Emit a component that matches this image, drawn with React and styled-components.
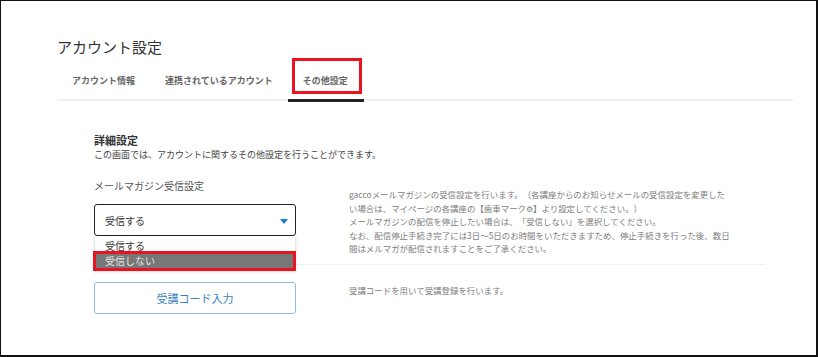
import React from "react";
import styled, { createGlobalStyle } from "styled-components";

const GlobalStyle = createGlobalStyle`
  body {
    margin: 0;
    background: #fff;
    font-family: "Noto Sans CJK JP", "Noto Sans", sans-serif;
    text-spacing-trim: space-all;
  }
`;

const mailText = [
  "gaccoメールマガジンの受信設定を行います。（各講座からのお知らせメールの受信設定を変更した",
  "い場合は、マイページの各講座の【歯車マーク⚙】より設定してください。）",
  "メールマガジンの配信を停止したい場合は、「受信しない」を選択してください。",
  "なお、配信停止手続き完了には3日～5日のお時間をいただきますため、停止手続きを行った後、数日",
  "間はメルマガが配信されますことをご了承ください。",
];

function App() {
  return (
    <>
      <GlobalStyle />
      <Frame>
        <Title>アカウント設定</Title>
        <TabBar>
          <Tab>アカウント情報</Tab>
          <Tab>連携されているアカウント</Tab>
          <Tab active>
            その他設定
            <Marker />
          </Tab>
        </TabBar>

        <Section>
          <Heading>詳細設定</Heading>
          <Lead>この画面では、アカウントに関するその他設定を行うことができます。</Lead>

          <Row divided>
            <Left>
              <Label>メールマガジン受信設定</Label>
              <SelectBox>
                <span>受信する</span>
                <svg width="8" height="5" viewBox="0 0 8 5">
                  <path d="M0 0 H8 L4 5 Z" fill="#1f7bc4" />
                </svg>
                <Options>
                  <Option>受信する</Option>
                  <Option selected>受信しない</Option>
                </Options>
              </SelectBox>
            </Left>
            <Note offset={9}>
              {mailText.map((line) => (
                <Line key={line}>{line}</Line>
              ))}
            </Note>
          </Row>

          <Row>
            <Left>
              <CodeButton>受講コード入力</CodeButton>
            </Left>
            <Note offset={2}>
              <Line>受講コードを用いて受講登録を行います。</Line>
            </Note>
          </Row>
        </Section>
      </Frame>
    </>
  );
}

const Frame = styled.div`
  box-sizing: border-box;
  width: 818px;
  height: 357px;
  border: 1px solid #111;
  border-right-width: 2px;
  border-bottom-width: 2px;
  padding: 36px 23px 0 56px;
  overflow: hidden;
`;

const Title = styled.h1`
  margin: 0;
  font-size: 15px;
  line-height: 20px;
  font-weight: 400;
  color: #333;
`;

const TabBar = styled.div`
  display: flex;
  margin-top: 3px;
  height: 39px;
  border-bottom: 2px solid #efefef;
`;

const Tab = styled.div`
  position: relative;
  display: flex;
  align-items: center;
  padding: 2px 15px 0;
  font-size: 9px;
  font-weight: 700;
  color: #666;
  white-space: nowrap;

  ${({ active }) =>
    active &&
    `
    &::after {
      content: "";
      position: absolute;
      left: 0;
      right: -1px;
      top: 100%;
      height: 3px;
      background: #222;
    }
  `}
`;

const Marker = styled.span`
  position: absolute;
  left: 4px;
  right: 1px;
  top: -2px;
  bottom: 5px;
  border: 3px solid #e8141f;
`;

const Section = styled.div`
  padding: 32px 27px 0 37px;
`;

const Heading = styled.h2`
  margin: 0;
  font-size: 11px;
  line-height: 14px;
  font-weight: 700;
  color: #333;
`;

const Lead = styled.p`
  margin: 1px 0 0;
  font-size: 9px;
  line-height: 14px;
  color: #444;
`;

const Row = styled.div`
  display: flex;
  gap: 53px;
  padding: ${({ divided }) => (divided ? "17px 0 8px" : "17px 0 0")};
  border-bottom: ${({ divided }) => (divided ? "1px solid #f0f0f0" : "none")};
`;

const Left = styled.div`
  width: 202px;
  flex: none;
`;

const Label = styled.div`
  font-size: 10px;
  line-height: 14px;
  color: #555;
  margin-bottom: 11px;
`;

const SelectBox = styled.div`
  position: relative;
  box-sizing: border-box;
  height: 32px;
  display: flex;
  align-items: center;
  justify-content: space-between;
  padding: 1px 7px 0 10px;
  border: 1px solid #222;
  border-radius: 3px;
  font-size: 10px;
  color: #333;

  svg {
    margin-top: 2px;
  }
`;

const Options = styled.div`
  position: absolute;
  top: calc(100% + 1px);
  left: 0;
  right: 0;
  background: #fff;
  box-shadow: 0 1px 3px rgba(0, 0, 0, 0.25);
  padding-bottom: 2px;
`;

const Option = styled.div`
  position: relative;
  padding: ${({ selected }) => (selected ? "0 10px" : "3px 10px 1px")};
  font-size: 10px;
  line-height: 14px;
  color: ${({ selected }) => (selected ? "#e6e6e6" : "#333")};
  background: ${({ selected }) => (selected ? "#777" : "#fff")};

  ${({ selected }) =>
    selected &&
    `
    &::after {
      content: "";
      position: absolute;
      inset: -3px -1px -3px -2px;
      border: 3px solid #e8141f;
    }
  `}
`;

const Note = styled.div`
  flex: 1;
  padding-top: ${({ offset }) => offset}px;
  font-size: 8.45px;
  line-height: 13.5px;
  color: #7d7d7d;
`;

const Line = styled.div`
  white-space: nowrap;
`;

const CodeButton = styled.button`
  box-sizing: border-box;
  width: 100%;
  height: 32px;
  background: #fff;
  border: 1px solid #8cbde0;
  border-radius: 3px;
  font-family: inherit;
  font-size: 11px;
  color: #3a7fc1;
  cursor: pointer;
`;

export default App;
